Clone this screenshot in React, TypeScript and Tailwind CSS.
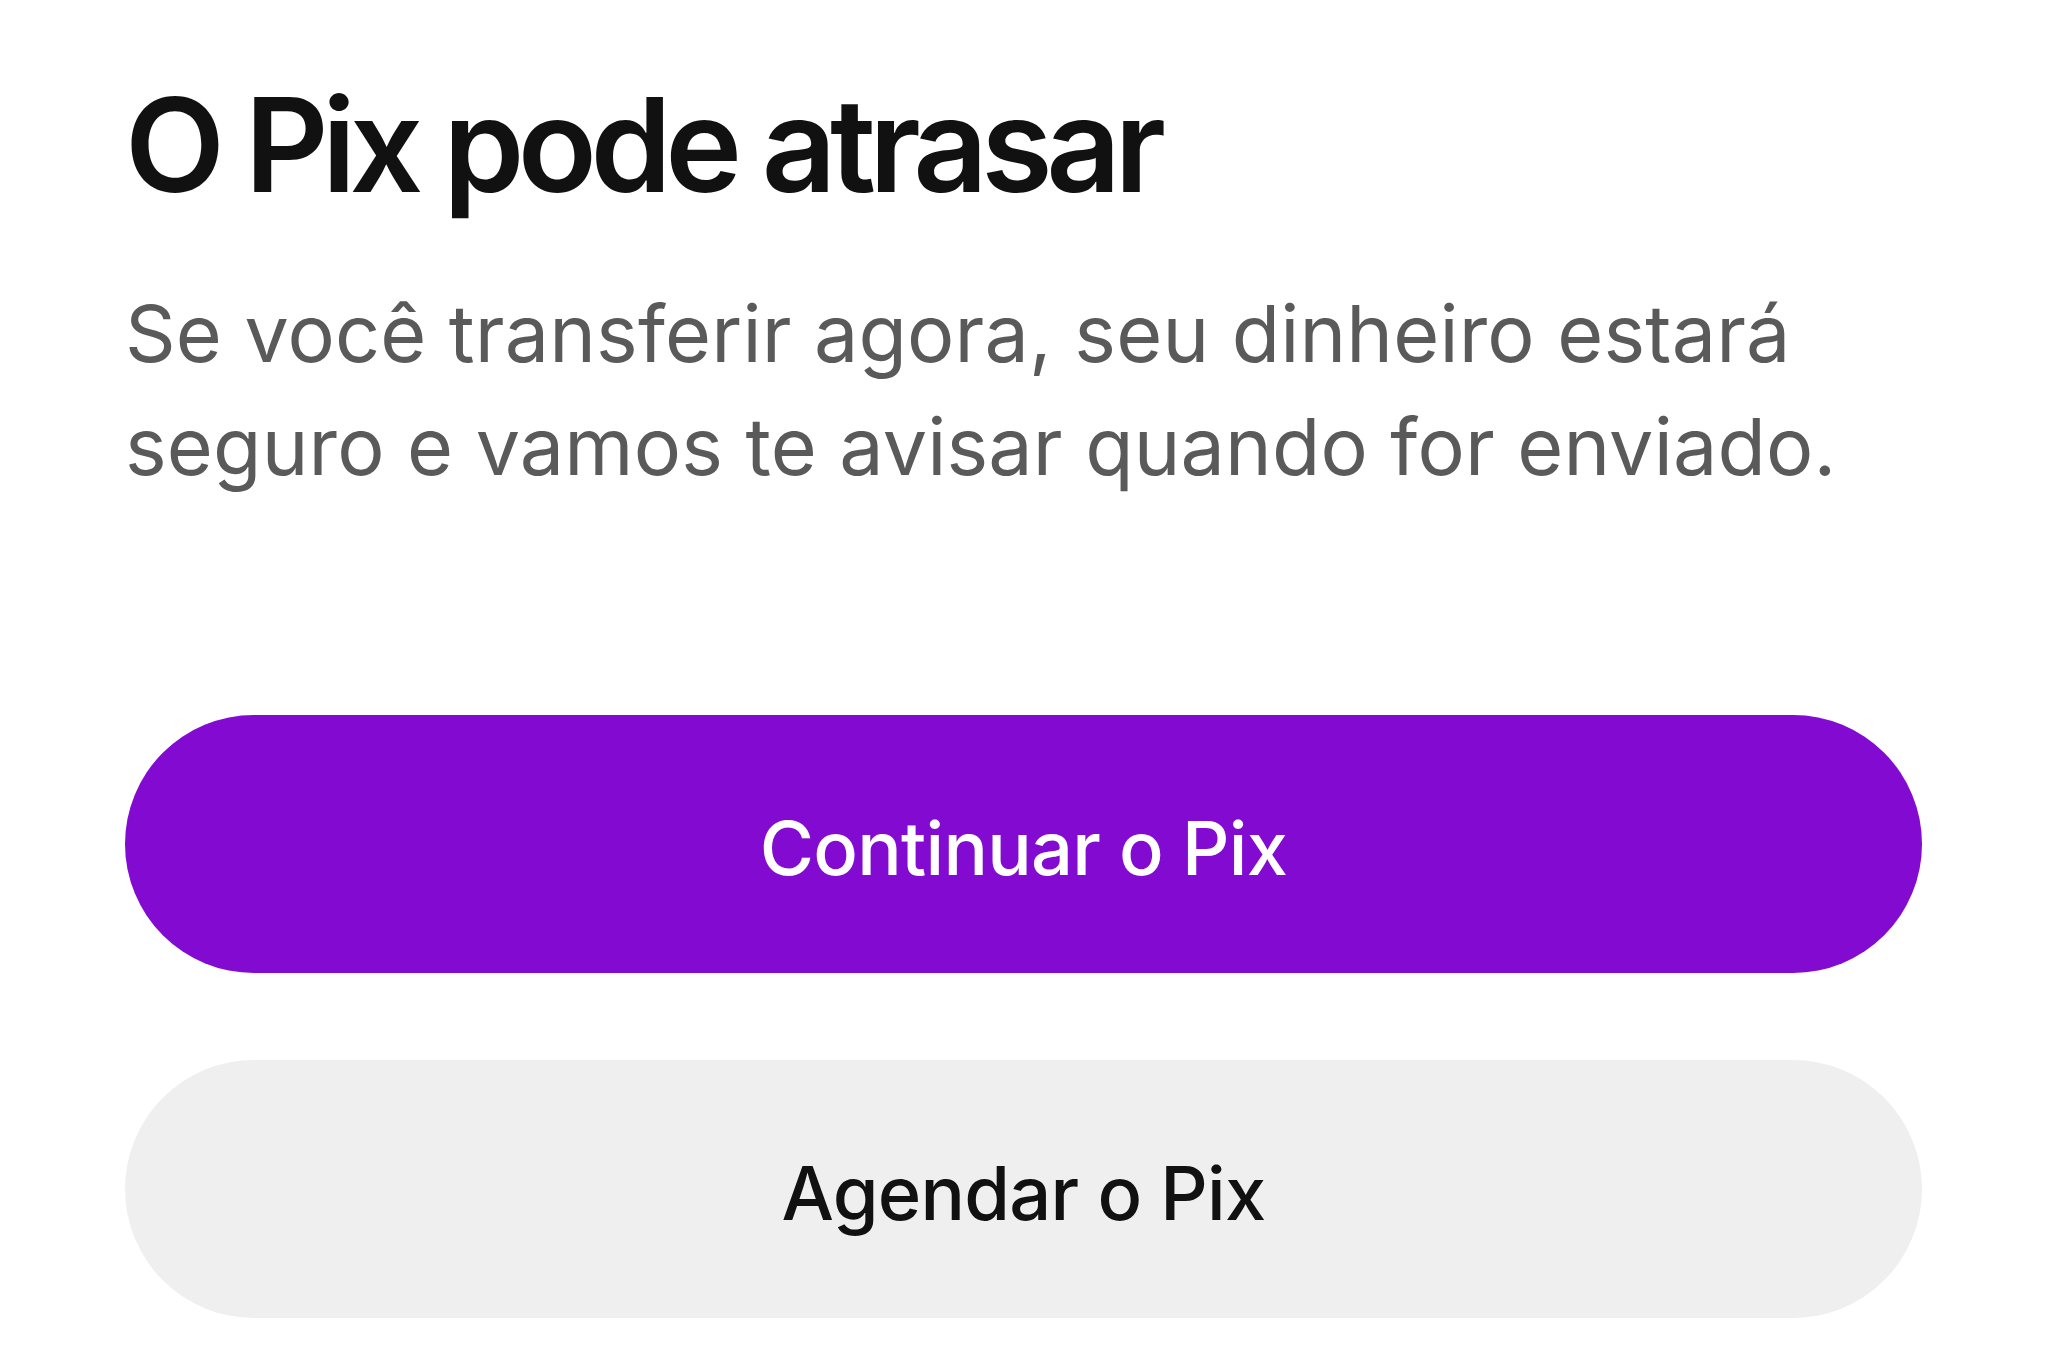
const App = () => {
  return (
    <div className="min-h-screen w-full bg-white font-['Inter',sans-serif]">
      <div className="flex flex-col pl-[125px] pr-[126px] pt-[80px]">
        {/* Title */}
        <h1 className="text-[130px] leading-none font-semibold tracking-[-0.05em] text-[#111111]">
          O Pix pode atrasar
        </h1>

        {/* Description */}
        <p className="mt-[67px] text-[79px] leading-[113px] font-normal tracking-[0.002em] text-[#5a5a5a]">
          Se você transferir agora, seu dinheiro estará
          <br />
          seguro e vamos te avisar quando for enviado.
        </p>

        {/* Actions */}
        <div className="mt-[212px] flex flex-col gap-[87px]">
          <button className="h-[258px] w-full rounded-full bg-[#820ad1] pt-[8px] text-[74px] font-medium tracking-[-0.01em] text-white">
            Continuar o Pix
          </button>
          <button className="h-[258px] w-full rounded-full bg-[#efefef] pt-[8px] text-[74px] font-medium tracking-[-0.01em] text-[#111111]">
            Agendar o Pix
          </button>
        </div>
      </div>
    </div>
  );
};

export default App;
